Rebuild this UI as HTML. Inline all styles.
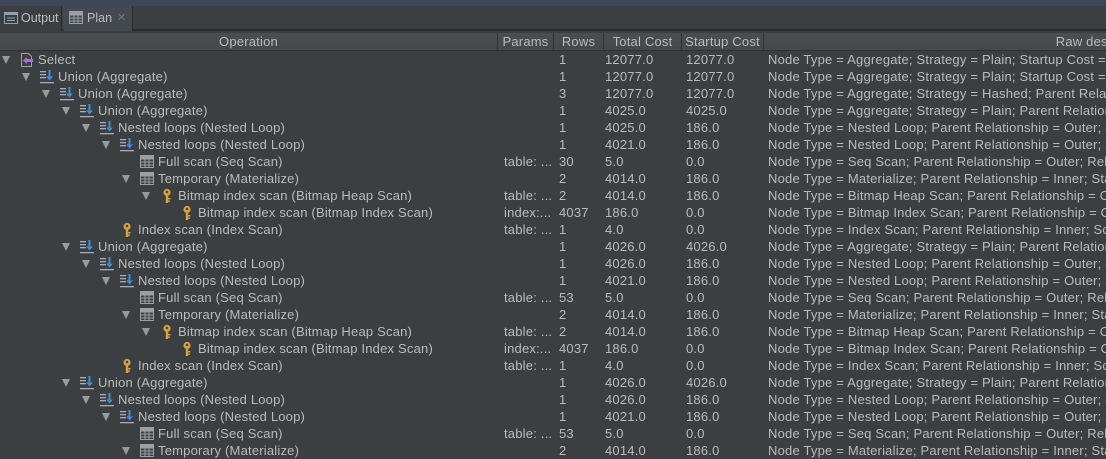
<!DOCTYPE html>
<html><head><meta charset="utf-8"><style>
*{margin:0;padding:0;box-sizing:border-box}
body{width:1106px;height:456px;overflow:hidden;background:#3c3f41;font-family:"Liberation Sans",sans-serif;font-size:13px;letter-spacing:0.2px;color:#bbbbbb;position:relative}
.top{position:absolute;left:0;top:0;width:1106px;height:6px;background:#3d4757}
.tabs{position:absolute;left:0;top:6px;width:1106px;height:25px;background:#3c3f41;border-bottom:2px solid #2b2b2b}
.tab{position:absolute;top:0;height:25px;line-height:24px;color:#bbb;font-size:12.5px;letter-spacing:0}
.hdr{position:absolute;left:0;top:33px;width:1106px;height:18px;background:linear-gradient(#4b4e50,#45484a);border-bottom:1px solid #2f3133}
.h{position:absolute;top:0;height:17px;line-height:17px;text-align:center;border-left:1px solid #2f3133;white-space:nowrap}
.r{position:absolute;left:0;width:1106px;height:17px;line-height:17px;white-space:nowrap}
.r span{position:absolute;top:0}
.tri{width:0;height:0;border-left:4px solid transparent;border-right:4px solid transparent;border-top:8px solid #9a9a9a;top:5px!important}
svg{position:absolute;top:1px}
</style></head><body>
<svg width="0" height="0" style="position:absolute"><defs>
<g id="u"><rect x="1" y="2" width="6" height="1.3" fill="#aab"/><rect x="1" y="5" width="6" height="1.3" fill="#aab"/><rect x="1" y="8" width="6" height="1.3" fill="#aab"/><rect x="1" y="13" width="14" height="1.3" fill="#aab"/><rect x="9.5" y="1" width="2" height="7" fill="#3d8fd1"/><path d="M7 7.5h7l-3.5 4z" fill="#3d8fd1"/></g>
<g id="t"><rect x="1.5" y="1.5" width="13" height="12" fill="none" stroke="#9aa0a6"/><path d="M1.5 5h13M1.5 8h13M1.5 11h13M6 1.5v12M10 1.5v12" stroke="#9aa0a6" stroke-width="1"/><rect x="1.5" y="1.5" width="13" height="3" fill="#9aa0a6"/></g>
<g id="k"><circle cx="8" cy="4.5" r="3.6" fill="#d6a03a"/><circle cx="8" cy="4" r="1.2" fill="#3c3f41"/><rect x="6.8" y="7" width="2.4" height="8" fill="#d6a03a"/><rect x="9" y="10" width="2.5" height="1.4" fill="#d6a03a"/><rect x="9" y="12.5" width="2" height="1.4" fill="#d6a03a"/></g>
<g id="s"><path d="M2.5 1.5h7l3 3v10h-10z" fill="none" stroke="#9aa0a6"/><path d="M4 8.5l4-3.5v2h6v3h-6v2z" fill="#b36ad9"/></g>
</defs></svg>
<div class="top"></div>
<div class="tabs">
<div class="tab" style="left:0;width:62px;background:#3c3f41;border-right:1px solid #2b2b2b"><svg width="16" height="16" style="left:3px;top:4px"><rect x="1.5" y="2.5" width="13" height="11" fill="none" stroke="#8fa0b0"/><rect x="1.5" y="2.5" width="13" height="2.5" fill="#8fa0b0"/><path d="M4 8h8M4 10.5h8" stroke="#8fa0b0"/></svg><span style="position:absolute;left:21px">Output</span></div>
<div class="tab" style="left:63px;width:70px;background:#44494f;border-right:1px solid #2b2b2b"><svg width="16" height="16" style="left:5px;top:4px"><use href="#t"/></svg><span style="position:absolute;left:24px">Plan</span><span style="position:absolute;left:54px;color:#777;font-size:11px">✕</span></div>
</div>
<div class="hdr">
<div class="h" style="left:0;width:497px;border:0">Operation</div>
<div class="h" style="left:497px;width:56px">Params</div>
<div class="h" style="left:553px;width:50px">Rows</div>
<div class="h" style="left:603px;width:78px">Total Cost</div>
<div class="h" style="left:681px;width:82px">Startup Cost</div>
<div class="h" style="left:763px;width:680px">Raw description</div>
</div>

<div class="r" style="top:51px"><span class="tri" style="left:2px"></span><svg width="16" height="16" style="left:19px"><use href="#s"/></svg><span style="left:38px">Select</span><span style="left:559px">1</span><span style="left:605px">12077.0</span><span style="left:686px">12077.0</span><span style="left:768px">Node Type = Aggregate; Strategy = Plain; Startup Cost = 12077.0</span></div>
<div class="r" style="top:68px"><span class="tri" style="left:22px"></span><svg width="16" height="16" style="left:39px"><use href="#u"/></svg><span style="left:58px">Union (Aggregate)</span><span style="left:559px">1</span><span style="left:605px">12077.0</span><span style="left:686px">12077.0</span><span style="left:768px">Node Type = Aggregate; Strategy = Plain; Startup Cost = 12077.0</span></div>
<div class="r" style="top:85px"><span class="tri" style="left:42px"></span><svg width="16" height="16" style="left:59px"><use href="#u"/></svg><span style="left:78px">Union (Aggregate)</span><span style="left:559px">3</span><span style="left:605px">12077.0</span><span style="left:686px">12077.0</span><span style="left:768px">Node Type = Aggregate; Strategy = Hashed; Parent Relationship</span></div>
<div class="r" style="top:102px"><span class="tri" style="left:62px"></span><svg width="16" height="16" style="left:79px"><use href="#u"/></svg><span style="left:98px">Union (Aggregate)</span><span style="left:559px">1</span><span style="left:605px">4025.0</span><span style="left:686px">4025.0</span><span style="left:768px">Node Type = Aggregate; Strategy = Plain; Parent Relationship</span></div>
<div class="r" style="top:119px"><span class="tri" style="left:82px"></span><svg width="16" height="16" style="left:99px"><use href="#u"/></svg><span style="left:118px">Nested loops (Nested Loop)</span><span style="left:559px">1</span><span style="left:605px">4025.0</span><span style="left:686px">186.0</span><span style="left:768px">Node Type = Nested Loop; Parent Relationship = Outer; Join</span></div>
<div class="r" style="top:136px"><span class="tri" style="left:102px"></span><svg width="16" height="16" style="left:119px"><use href="#u"/></svg><span style="left:138px">Nested loops (Nested Loop)</span><span style="left:559px">1</span><span style="left:605px">4021.0</span><span style="left:686px">186.0</span><span style="left:768px">Node Type = Nested Loop; Parent Relationship = Outer; Join</span></div>
<div class="r" style="top:153px"><svg width="16" height="16" style="left:139px"><use href="#t"/></svg><span style="left:158px">Full scan (Seq Scan)</span><span style="left:504px">table: ...</span><span style="left:559px">30</span><span style="left:605px">5.0</span><span style="left:686px">0.0</span><span style="left:768px">Node Type = Seq Scan; Parent Relationship = Outer; Relation</span></div>
<div class="r" style="top:170px"><span class="tri" style="left:122px"></span><svg width="16" height="16" style="left:139px"><use href="#t"/></svg><span style="left:158px">Temporary (Materialize)</span><span style="left:559px">2</span><span style="left:605px">4014.0</span><span style="left:686px">186.0</span><span style="left:768px">Node Type = Materialize; Parent Relationship = Inner; Startup</span></div>
<div class="r" style="top:187px"><span class="tri" style="left:142px"></span><svg width="16" height="16" style="left:159px"><use href="#k"/></svg><span style="left:178px">Bitmap index scan (Bitmap Heap Scan)</span><span style="left:504px">table: ...</span><span style="left:559px">2</span><span style="left:605px">4014.0</span><span style="left:686px">186.0</span><span style="left:768px">Node Type = Bitmap Heap Scan; Parent Relationship = Outer</span></div>
<div class="r" style="top:204px"><svg width="16" height="16" style="left:179px"><use href="#k"/></svg><span style="left:198px">Bitmap index scan (Bitmap Index Scan)</span><span style="left:504px">index:...</span><span style="left:559px">4037</span><span style="left:605px">186.0</span><span style="left:686px">0.0</span><span style="left:768px">Node Type = Bitmap Index Scan; Parent Relationship = Outer</span></div>
<div class="r" style="top:221px"><svg width="16" height="16" style="left:119px"><use href="#k"/></svg><span style="left:138px">Index scan (Index Scan)</span><span style="left:504px">table: ...</span><span style="left:559px">1</span><span style="left:605px">4.0</span><span style="left:686px">0.0</span><span style="left:768px">Node Type = Index Scan; Parent Relationship = Inner; Scan</span></div>

<div class="r" style="top:238px"><span class="tri" style="left:62px"></span><svg width="16" height="16" style="left:79px"><use href="#u"/></svg><span style="left:98px">Union (Aggregate)</span><span style="left:559px">1</span><span style="left:605px">4026.0</span><span style="left:686px">4026.0</span><span style="left:768px">Node Type = Aggregate; Strategy = Plain; Parent Relationship</span></div>
<div class="r" style="top:255px"><span class="tri" style="left:82px"></span><svg width="16" height="16" style="left:99px"><use href="#u"/></svg><span style="left:118px">Nested loops (Nested Loop)</span><span style="left:559px">1</span><span style="left:605px">4026.0</span><span style="left:686px">186.0</span><span style="left:768px">Node Type = Nested Loop; Parent Relationship = Outer; Join</span></div>
<div class="r" style="top:272px"><span class="tri" style="left:102px"></span><svg width="16" height="16" style="left:119px"><use href="#u"/></svg><span style="left:138px">Nested loops (Nested Loop)</span><span style="left:559px">1</span><span style="left:605px">4021.0</span><span style="left:686px">186.0</span><span style="left:768px">Node Type = Nested Loop; Parent Relationship = Outer; Join</span></div>
<div class="r" style="top:289px"><svg width="16" height="16" style="left:139px"><use href="#t"/></svg><span style="left:158px">Full scan (Seq Scan)</span><span style="left:504px">table: ...</span><span style="left:559px">53</span><span style="left:605px">5.0</span><span style="left:686px">0.0</span><span style="left:768px">Node Type = Seq Scan; Parent Relationship = Outer; Relation</span></div>
<div class="r" style="top:306px"><span class="tri" style="left:122px"></span><svg width="16" height="16" style="left:139px"><use href="#t"/></svg><span style="left:158px">Temporary (Materialize)</span><span style="left:559px">2</span><span style="left:605px">4014.0</span><span style="left:686px">186.0</span><span style="left:768px">Node Type = Materialize; Parent Relationship = Inner; Startup</span></div>
<div class="r" style="top:323px"><span class="tri" style="left:142px"></span><svg width="16" height="16" style="left:159px"><use href="#k"/></svg><span style="left:178px">Bitmap index scan (Bitmap Heap Scan)</span><span style="left:504px">table: ...</span><span style="left:559px">2</span><span style="left:605px">4014.0</span><span style="left:686px">186.0</span><span style="left:768px">Node Type = Bitmap Heap Scan; Parent Relationship = Outer</span></div>
<div class="r" style="top:340px"><svg width="16" height="16" style="left:179px"><use href="#k"/></svg><span style="left:198px">Bitmap index scan (Bitmap Index Scan)</span><span style="left:504px">index:...</span><span style="left:559px">4037</span><span style="left:605px">186.0</span><span style="left:686px">0.0</span><span style="left:768px">Node Type = Bitmap Index Scan; Parent Relationship = Outer</span></div>
<div class="r" style="top:357px"><svg width="16" height="16" style="left:119px"><use href="#k"/></svg><span style="left:138px">Index scan (Index Scan)</span><span style="left:504px">table: ...</span><span style="left:559px">1</span><span style="left:605px">4.0</span><span style="left:686px">0.0</span><span style="left:768px">Node Type = Index Scan; Parent Relationship = Inner; Scan</span></div>

<div class="r" style="top:374px"><span class="tri" style="left:62px"></span><svg width="16" height="16" style="left:79px"><use href="#u"/></svg><span style="left:98px">Union (Aggregate)</span><span style="left:559px">1</span><span style="left:605px">4026.0</span><span style="left:686px">4026.0</span><span style="left:768px">Node Type = Aggregate; Strategy = Plain; Parent Relationship</span></div>
<div class="r" style="top:391px"><span class="tri" style="left:82px"></span><svg width="16" height="16" style="left:99px"><use href="#u"/></svg><span style="left:118px">Nested loops (Nested Loop)</span><span style="left:559px">1</span><span style="left:605px">4026.0</span><span style="left:686px">186.0</span><span style="left:768px">Node Type = Nested Loop; Parent Relationship = Outer; Join</span></div>
<div class="r" style="top:408px"><span class="tri" style="left:102px"></span><svg width="16" height="16" style="left:119px"><use href="#u"/></svg><span style="left:138px">Nested loops (Nested Loop)</span><span style="left:559px">1</span><span style="left:605px">4021.0</span><span style="left:686px">186.0</span><span style="left:768px">Node Type = Nested Loop; Parent Relationship = Outer; Join</span></div>
<div class="r" style="top:425px"><svg width="16" height="16" style="left:139px"><use href="#t"/></svg><span style="left:158px">Full scan (Seq Scan)</span><span style="left:504px">table: ...</span><span style="left:559px">53</span><span style="left:605px">5.0</span><span style="left:686px">0.0</span><span style="left:768px">Node Type = Seq Scan; Parent Relationship = Outer; Relation</span></div>
<div class="r" style="top:442px"><span class="tri" style="left:122px"></span><svg width="16" height="16" style="left:139px"><use href="#t"/></svg><span style="left:158px">Temporary (Materialize)</span><span style="left:559px">2</span><span style="left:605px">4014.0</span><span style="left:686px">186.0</span><span style="left:768px">Node Type = Materialize; Parent Relationship = Inner; Startup</span></div>
</body></html>
